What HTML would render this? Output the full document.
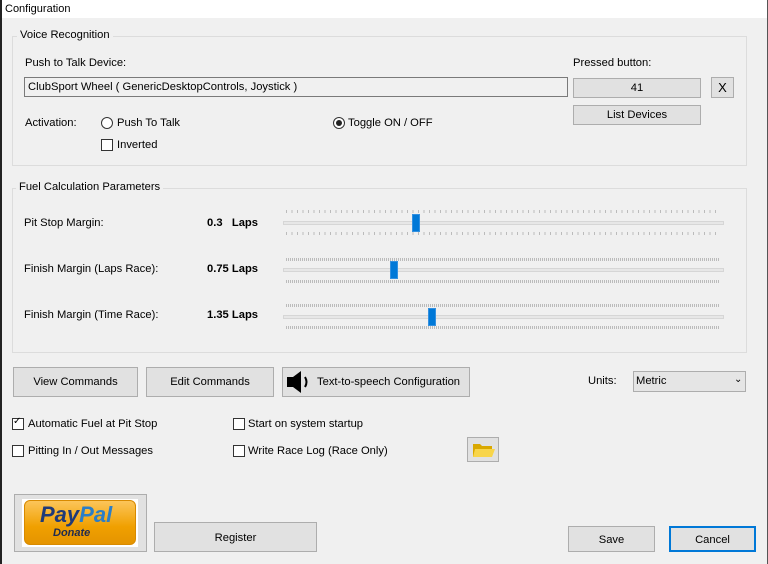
<!DOCTYPE html>
<html><head><style>
*{box-sizing:border-box;margin:0;padding:0}
body{width:768px;height:564px;background:#f0f0f0;font-family:"Liberation Sans",sans-serif;font-size:11.2px;color:#000;position:relative;overflow:hidden}
.a{position:absolute;white-space:nowrap}
.title{left:0;top:0;width:768px;height:18px;background:#fff}
.lb{left:0;top:0;width:2px;height:564px;background:#222}
.rb{right:0;top:0;width:1px;height:564px;background:#555}
.grp{border:1px solid #dcdcdc}
.gl{background:#f0f0f0;padding:0 3px}
.btn{background:#e1e1e1;border:1px solid #adadad;text-align:center}
.cb{width:12px;height:12px;border:1px solid #333;background:#fff}
.rd{width:12px;height:12px;border:1px solid #333;border-radius:50%;background:#fff}
.track{height:4px;background:#e7e7e7;border:1px solid #d6d6d6}
.tick{height:3px;background:repeating-linear-gradient(90deg,#bbb 0 1px,transparent 1px 5.5px)}
.tick2{height:3px;background:repeating-linear-gradient(90deg,#bbb 0 1px,transparent 1px 2px)}
.th{width:8px;height:18px;background:#0078d7;border:1px solid #3390e0}
</style></head><body>
<div class="a title"></div>
<div class="a" style="left:5px;top:3px;font-size:11px">Configuration</div>
<div class="a lb"></div><div class="a rb"></div>

<div class="a grp" style="left:12px;top:36px;width:735px;height:130px"></div>
<div class="a gl" style="left:17px;top:29px">Voice Recognition</div>
<div class="a" style="left:25px;top:57px">Push to Talk Device:</div>
<div class="a" style="left:24px;top:77px;width:544px;height:20px;border:1px solid #7a7a7a;background:#f0f0f0;padding:3px 3px">ClubSport Wheel ( GenericDesktopControls, Joystick )</div>
<div class="a" style="left:573px;top:57px">Pressed button:</div>
<div class="a btn" style="left:573px;top:78px;width:128px;height:20px;line-height:19px">41</div>
<div class="a btn" style="left:711px;top:77px;width:23px;height:21px;line-height:20px;font-size:13px">X</div>
<div class="a btn" style="left:573px;top:105px;width:128px;height:20px;line-height:19px">List Devices</div>
<div class="a" style="left:25px;top:117px">Activation:</div>
<div class="a rd" style="left:101px;top:117px"></div>
<div class="a" style="left:117px;top:117px">Push To Talk</div>
<div class="a cb" style="left:101px;top:139px"></div>
<div class="a" style="left:117px;top:139px">Inverted</div>
<div class="a rd" style="left:333px;top:117px"></div>
<div class="a" style="left:336px;top:120px;width:6px;height:6px;border-radius:50%;background:#222"></div>
<div class="a" style="left:348px;top:117px">Toggle ON / OFF</div>

<div class="a grp" style="left:12px;top:188px;width:735px;height:165px"></div>
<div class="a gl" style="left:16px;top:181px">Fuel Calculation Parameters</div>

<div class="a" style="left:24px;top:217px">Pit Stop Margin:</div>
<div class="a" style="left:207px;top:217px;font-weight:bold">0.3 &nbsp; Laps</div>
<div class="a tick" style="left:286px;top:210px;width:434px"></div>
<div class="a track" style="left:283px;top:221px;width:441px"></div>
<div class="a tick" style="left:286px;top:232px;width:434px"></div>
<div class="a th" style="left:412px;top:214px"></div>

<div class="a" style="left:24px;top:263px">Finish Margin (Laps Race):</div>
<div class="a" style="left:207px;top:263px;font-weight:bold">0.75 Laps</div>
<div class="a tick2" style="left:286px;top:258px;width:434px"></div>
<div class="a track" style="left:283px;top:268px;width:441px"></div>
<div class="a tick2" style="left:286px;top:280px;width:434px"></div>
<div class="a th" style="left:390px;top:261px"></div>

<div class="a" style="left:24px;top:309px">Finish Margin (Time Race):</div>
<div class="a" style="left:207px;top:309px;font-weight:bold">1.35 Laps</div>
<div class="a tick2" style="left:286px;top:304px;width:434px"></div>
<div class="a track" style="left:283px;top:315px;width:441px"></div>
<div class="a tick2" style="left:286px;top:326px;width:434px"></div>
<div class="a th" style="left:428px;top:308px"></div>

<div class="a btn" style="left:13px;top:367px;width:125px;height:30px;line-height:29px">View Commands</div>
<div class="a btn" style="left:146px;top:367px;width:128px;height:30px;line-height:29px">Edit Commands</div>
<div class="a btn" style="left:282px;top:367px;width:188px;height:30px;line-height:29px;text-align:left;padding-left:34px">Text-to-speech Configuration</div>
<svg class="a" style="left:286px;top:370px" width="28" height="24"><rect x="1" y="7" width="6" height="10" fill="#000"/><path d="M7 7 L15 1 L15 23 L7 17Z" fill="#000"/><path d="M19 7 Q22 12 19 17" stroke="#000" stroke-width="2" fill="none"/></svg>
<div class="a" style="left:588px;top:375px">Units:</div>
<div class="a" style="left:633px;top:371px;width:113px;height:21px;border:1px solid #adadad;background:#e5e5e5;padding:3px 2px">Metric</div>
<div class="a" style="left:734px;top:374px;font-size:10px">&#8964;</div>

<div class="a cb" style="left:12px;top:418px"></div>
<div class="a" style="left:13px;top:416px;font-size:10px">✓</div>
<div class="a" style="left:28px;top:418px">Automatic Fuel at Pit Stop</div>
<div class="a cb" style="left:12px;top:445px"></div>
<div class="a" style="left:28px;top:445px">Pitting In / Out Messages</div>
<div class="a cb" style="left:233px;top:418px"></div>
<div class="a" style="left:248px;top:418px">Start on system startup</div>
<div class="a cb" style="left:233px;top:445px"></div>
<div class="a" style="left:248px;top:445px">Write Race Log (Race Only)</div>
<div class="a btn" style="left:467px;top:437px;width:32px;height:25px"></div>
<svg class="a" style="left:472px;top:441px" width="24" height="18"><path d="M1 3 L8 3 L10 5 L20 5 L20 16 L1 16Z" fill="#d9a800"/><path d="M3 8 L23 8 L20 16 L1 16Z" fill="#f8d54a"/></svg>

<div class="a" style="left:14px;top:494px;width:133px;height:58px;border:1px solid #adadad;background:#e1e1e1"></div>
<div class="a" style="left:22px;top:499px;width:116px;height:48px;background:#fff"></div>
<div class="a" style="left:24px;top:500px;width:112px;height:45px;border-radius:6px;background:linear-gradient(#fcc55a,#f0a000 60%,#e59400);border:1px solid #d88a00"></div>
<div class="a" style="left:40px;top:502px;font-size:22px;font-weight:bold;font-style:italic;color:#1f3a78">Pay<span style="color:#2b7ec8">Pal</span></div>
<div class="a" style="left:53px;top:527px;font-size:11px;font-weight:bold;font-style:italic;color:#1f2a50">Donate</div>
<div class="a btn" style="left:154px;top:522px;width:163px;height:30px;line-height:30px">Register</div>
<div class="a btn" style="left:568px;top:526px;width:87px;height:26px;line-height:26px">Save</div>
<div class="a btn" style="left:669px;top:526px;width:87px;height:26px;line-height:24px;border:2px solid #0078d7">Cancel</div>
</body></html>
